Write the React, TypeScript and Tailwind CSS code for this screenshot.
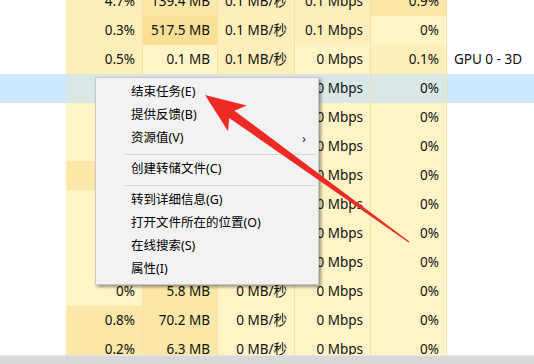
import React from "react";

type Cell = { t: string; c: string };

const L0 = "bg-[#fff4c6]";
const L1 = "bg-[#fdeeba]";
const L2 = "bg-[#fbe7a8]";
const L3 = "bg-[#fadf96]";
const SEL = "bg-[#d9e8e6]";

type Row = { cells: Cell[]; engine?: string; selected?: boolean };

const rows: Row[] = [
  { cells: [{ t: "4.7%", c: L1 }, { t: "139.4 MB", c: L2 }, { t: "0.1 MB/秒", c: L1 }, { t: "0.1 Mbps", c: L1 }, { t: "0.9%", c: L2 }] },
  { cells: [{ t: "0.3%", c: L1 }, { t: "517.5 MB", c: L3 }, { t: "0.1 MB/秒", c: L1 }, { t: "0.1 Mbps", c: L1 }, { t: "0%", c: L0 }] },
  { cells: [{ t: "0.5%", c: L1 }, { t: "0.1 MB", c: L0 }, { t: "0.1 MB/秒", c: L1 }, { t: "0 Mbps", c: L0 }, { t: "0.1%", c: L1 }], engine: "GPU 0 - 3D" },
  { cells: [{ t: "", c: SEL }, { t: "", c: SEL }, { t: "", c: SEL }, { t: "0 Mbps", c: SEL }, { t: "0%", c: SEL }], selected: true },
  { cells: [{ t: "", c: L0 }, { t: "", c: L1 }, { t: "", c: L0 }, { t: "0 Mbps", c: L0 }, { t: "0%", c: L0 }] },
  { cells: [{ t: "", c: L0 }, { t: "", c: L1 }, { t: "", c: L0 }, { t: "0 Mbps", c: L0 }, { t: "0%", c: L0 }] },
  { cells: [{ t: "", c: L2 }, { t: "", c: L1 }, { t: "", c: L0 }, { t: "0 Mbps", c: L0 }, { t: "0%", c: L0 }] },
  { cells: [{ t: "", c: L0 }, { t: "", c: L1 }, { t: "", c: L0 }, { t: "0 Mbps", c: L0 }, { t: "0%", c: L0 }] },
  { cells: [{ t: "", c: L0 }, { t: "", c: L1 }, { t: "", c: L0 }, { t: "0 Mbps", c: L0 }, { t: "0%", c: L0 }] },
  { cells: [{ t: "", c: L0 }, { t: "", c: L1 }, { t: "", c: L0 }, { t: "0 Mbps", c: L0 }, { t: "0%", c: L0 }] },
  { cells: [{ t: "0%", c: L0 }, { t: "5.8 MB", c: L2 }, { t: "0 MB/秒", c: L0 }, { t: "0 Mbps", c: L0 }, { t: "0%", c: L0 }] },
  { cells: [{ t: "0.8%", c: L2 }, { t: "70.2 MB", c: L2 }, { t: "0 MB/秒", c: L0 }, { t: "0 Mbps", c: L0 }, { t: "0%", c: L0 }] },
  { cells: [{ t: "0.2%", c: L2 }, { t: "6.3 MB", c: L2 }, { t: "0 MB/秒", c: L0 }, { t: "0 Mbps", c: L0 }, { t: "0%", c: L0 }] },
];

const widths = ["w-[77px]", "w-[75px]", "w-[77px]", "w-[76px]", "w-[76px]"];

type MenuItem = { label: string; sub?: boolean } | "sep";

const menu: MenuItem[] = [
  { label: "结束任务(E)" },
  { label: "提供反馈(B)" },
  { label: "资源值(V)", sub: true },
  "sep",
  { label: "创建转储文件(C)" },
  "sep",
  { label: "转到详细信息(G)" },
  { label: "打开文件所在的位置(O)" },
  { label: "在线搜索(S)" },
  { label: "属性(I)" },
];

export default function App() {
  const tip = { x: 205, y: 95 };
  const tail = { x: 409, y: 242 };
  const dx = tail.x - tip.x;
  const dy = tail.y - tip.y;
  const len = Math.hypot(dx, dy);
  const ux = dx / len;
  const uy = dy / len;
  const px = -uy;
  const py = ux;
  const at = (d: number, w: number) => `${tip.x + ux * d + px * w},${tip.y + uy * d + py * w}`;
  const arrowPts = [
    at(0, 0),
    at(40, 16),
    at(33, 4.5),
    at(len, 0.6),
    at(len, -0.6),
    at(33, -4.5),
    at(40, -16),
  ].join(" ");

  return (
    <div
      className="relative w-[534px] h-[364px] overflow-hidden bg-white flex flex-col text-[#111]"
      style={{ fontFamily: '"Noto Sans", "Noto Sans CJK SC", sans-serif' }}
    >
      <div className="flex-1 overflow-hidden">
        <div className="-mt-[13px] flex flex-col">
          {rows.map((r, i) => (
            <div
              key={i}
              className={`flex h-[29px] text-[13.5px] ${r.selected ? "bg-[#cce8ff]" : "bg-white"}`}
            >
              <div className="w-[66px] shrink-0" />
              {r.cells.map((c, j) => (
                <div
                  key={j}
                  className={`${widths[j]} shrink-0 ${c.c} border-r border-[#f1e1a4] flex items-center justify-end pr-[7px] whitespace-nowrap`}
                >
                  {c.t}
                </div>
              ))}
              <div className="flex-1 flex items-center pl-[7px] whitespace-nowrap">{r.engine ?? ""}</div>
            </div>
          ))}
        </div>
      </div>
      <div className="h-[9px] bg-[#d8d8d8] border-t border-[#e6e6e6]" />

      <div className="absolute left-[95px] top-[77px] w-[224px] bg-[#f2f2f2] border border-[#c9c9c9] shadow-[2px_2px_3px_rgba(0,0,0,0.4)] py-[3px] text-[12.5px] text-black">
        {menu.map((m, i) =>
          m === "sep" ? (
            <div key={i} className="h-[8px] flex items-center pl-[29px] pr-[2px]">
              <div className="h-px w-full bg-[#d5d5d5]" />
            </div>
          ) : (
            <div key={i} className="h-[23px] flex items-center pl-[35px] pr-[12px] justify-between">
              <span>{m.label}</span>
              {m.sub ? <span className="text-[13px] text-[#333]">›</span> : null}
            </div>
          )
        )}
      </div>

      <svg className="absolute left-0 top-0 pointer-events-none" width="534" height="364">
        <polygon points={arrowPts} fill="#ee2a24" />
      </svg>
    </div>
  );
}
